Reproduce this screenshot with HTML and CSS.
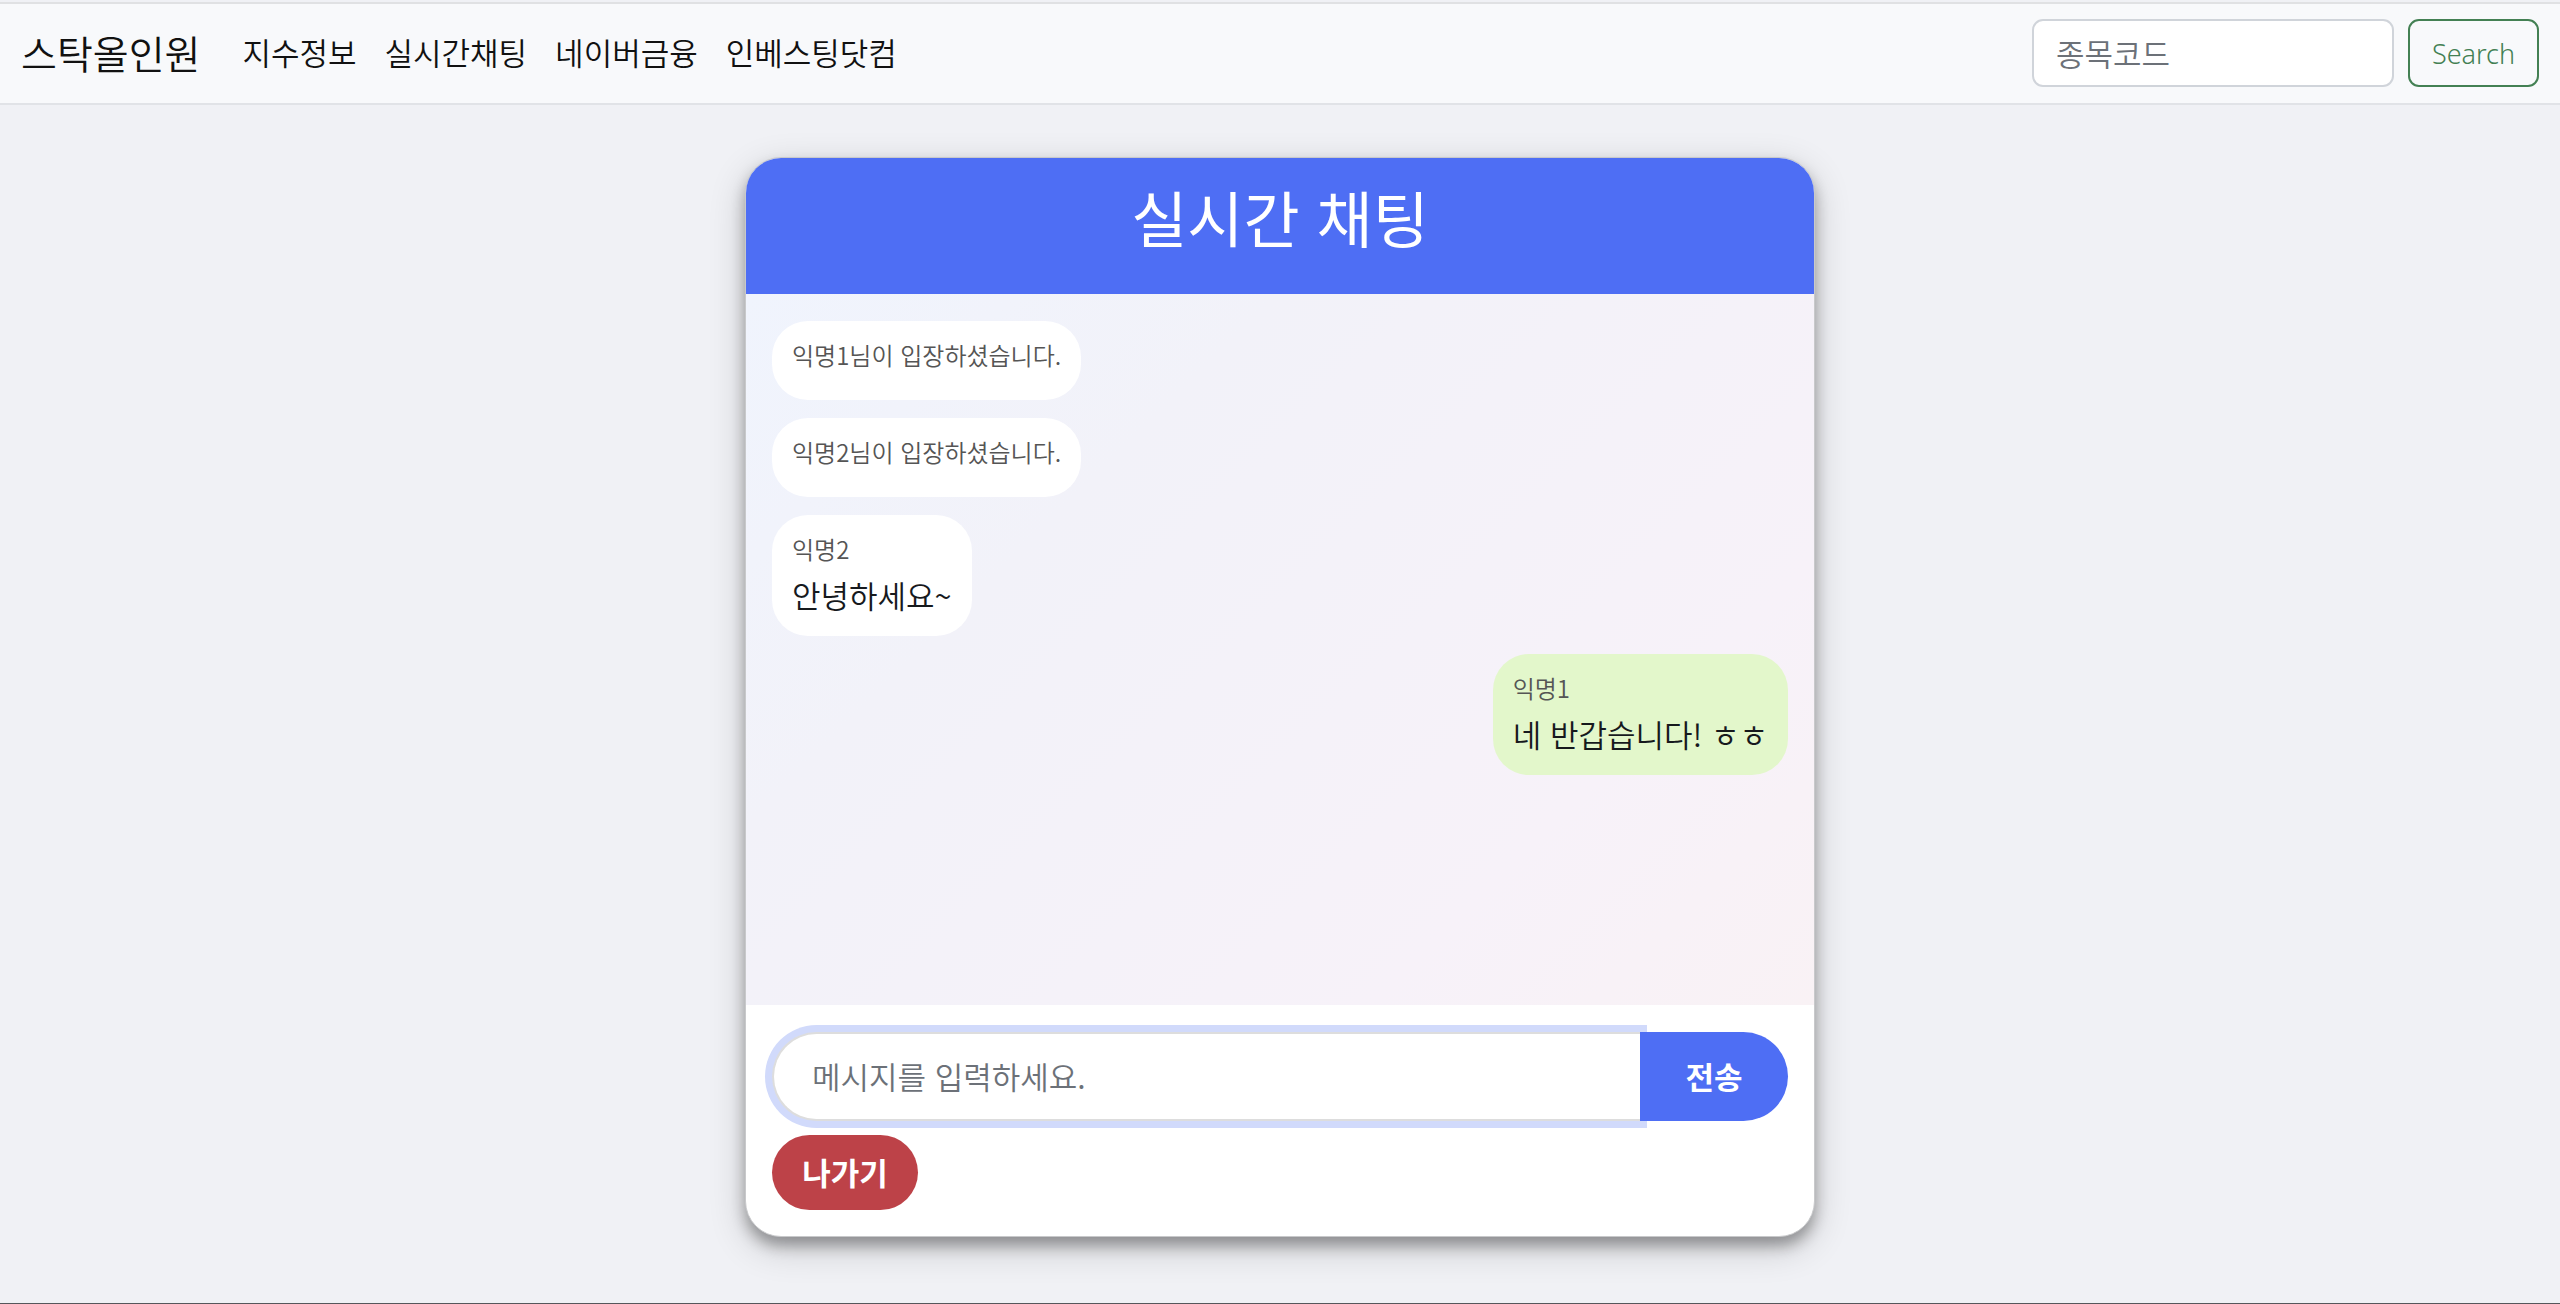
FILE: index.html
```
<!DOCTYPE html>
<html lang="ko">
<head>
  <meta charset="utf-8">
  <meta name="viewport" content="width=device-width, initial-scale=1">
  <title>스탁올인원</title>
  <link rel="stylesheet" href="styles.css">
</head>
<body>
  <nav class="navbar">
    <a class="brand" href="#">스탁올인원</a>
    <ul class="nav-links">
      <li><a href="#">지수정보</a></li>
      <li><a href="#">실시간채팅</a></li>
      <li><a href="#">네이버금융</a></li>
      <li><a href="#">인베스팅닷컴</a></li>
    </ul>
    <form class="search">
      <input class="search-input" type="search" placeholder="종목코드" aria-label="종목코드">
      <button class="search-button" type="button">Search</button>
    </form>
  </nav>

  <main class="page">
    <section class="chat">
      <header class="chat-header">
        <h1 class="chat-title">실시간 채팅</h1>
      </header>
      <div class="messages">
        <div class="bubble">
          <div class="sender">익명1님이 입장하셨습니다.</div>
        </div>
        <div class="bubble">
          <div class="sender">익명2님이 입장하셨습니다.</div>
        </div>
        <div class="bubble">
          <div class="sender">익명2</div>
          <div class="text">안녕하세요~</div>
        </div>
        <div class="bubble bubble-mine">
          <div class="sender">익명1</div>
          <div class="text">네 반갑습니다! ㅎㅎ</div>
        </div>
      </div>
      <footer class="chat-footer">
        <form class="compose">
          <input class="compose-input" type="text" placeholder="메시지를 입력하세요." aria-label="메시지">
          <button class="send-button" type="button">전송</button>
        </form>
        <button class="leave-button" type="button">나가기</button>
      </footer>
    </section>
  </main>
</body>
</html>
```
FILE: styles.css
```
* {
  box-sizing: border-box;
}

body {
  margin: 0;
  min-height: 100vh;
  display: flex;
  flex-direction: column;
  padding-top: 2px;
  border-bottom: 1px solid #55565a;
  background: #f0f1f5;
  color: #16191d;
  font-family: "Noto Sans CJK KR", sans-serif;
  font-size: 31px;
  font-weight: 350;
  line-height: 42px;
}

input,
button {
  margin: 0;
  font: inherit;
}

input::placeholder {
  color: #6c7178;
  opacity: 1;
}

.navbar {
  display: flex;
  align-items: center;
  padding: 15px 21px 16px;
  border-top: 2px solid #e0e1e3;
  border-bottom: 2px solid #e1e3e7;
  background: #f8f9fb;
}

.brand {
  margin-right: 42px;
  padding-bottom: 2px;
  color: #111;
  font-size: 39px;
  text-decoration: none;
}

.nav-links {
  display: flex;
  gap: 28px;
  margin: 0;
  padding: 0 0 2px;
  list-style: none;
}

.nav-links a {
  color: #111;
  text-decoration: none;
}

.search {
  display: flex;
  gap: 14px;
  margin-left: auto;
}

.search-input {
  width: 362px;
  height: 68px;
  padding: 0 22px 2px;
  border: 2px solid #d0d4da;
  border-radius: 11px;
  background: #fff;
}

.search-button {
  width: 131px;
  height: 68px;
  padding: 2px 0 0;
  border: 2px solid #438053;
  border-radius: 11px;
  background: transparent;
  color: #438053;
  font-family: "Noto Sans", sans-serif;
  font-size: 27px;
  font-weight: 350;
}

.page {
  padding: 52px 0 66px;
}

.chat {
  width: 1070px;
  max-width: 100%;
  margin: 0 auto;
  overflow: hidden;
  border: 1px solid #c8c9cb;
  border-radius: 36px;
  background: #fff;
  box-shadow: 0 9px 14px rgba(0, 0, 0, 0.3), 0 11px 36px rgba(0, 0, 0, 0.19);
}

.chat-header {
  padding: 25px 27px 43px;
  background: #4e6ef4;
  text-align: center;
}

.chat-title {
  margin: 0;
  color: #fff;
  font-size: 61px;
  font-weight: 400;
  line-height: 68px;
}

.messages {
  display: flex;
  flex-direction: column;
  align-items: flex-start;
  gap: 18px;
  min-height: 711px;
  padding: 27px 26px;
  background: linear-gradient(135deg, #f0f4fd, #f2f2f9 30%, #f7f2f9 75%, #f9f2f5);
}

.bubble {
  padding: 16px 20px 20px;
  border-radius: 36px;
  background: #fff;
}

.bubble-mine {
  align-self: flex-end;
  background: #e3f7cb;
}

.sender {
  margin-bottom: 7px;
  color: #555;
  font-size: 24px;
  line-height: 36px;
}

.chat-footer {
  padding: 27px 26px 26px;
}

.compose {
  display: flex;
  margin-bottom: 14px;
}

.compose-input {
  flex: 1;
  min-width: 0;
  height: 89px;
  padding: 0 38px 2px;
  border: 2px solid #ddd;
  border-right: 0;
  border-radius: 45px 0 0 45px;
  outline: 0;
  background: #fff;
  box-shadow: 0 0 0 7px #d1dafb;
}

.send-button {
  position: relative;
  width: 148px;
  padding: 0 0 2px;
  border: 0;
  border-radius: 0 45px 45px 0;
  background: #4e6ef4;
  color: #fff;
  font-weight: 700;
}

.leave-button {
  display: block;
  width: 146px;
  height: 75px;
  padding: 0 0 2px;
  border: 0;
  border-radius: 38px;
  background: #bd4248;
  color: #fff;
  font-weight: 700;
}
```
